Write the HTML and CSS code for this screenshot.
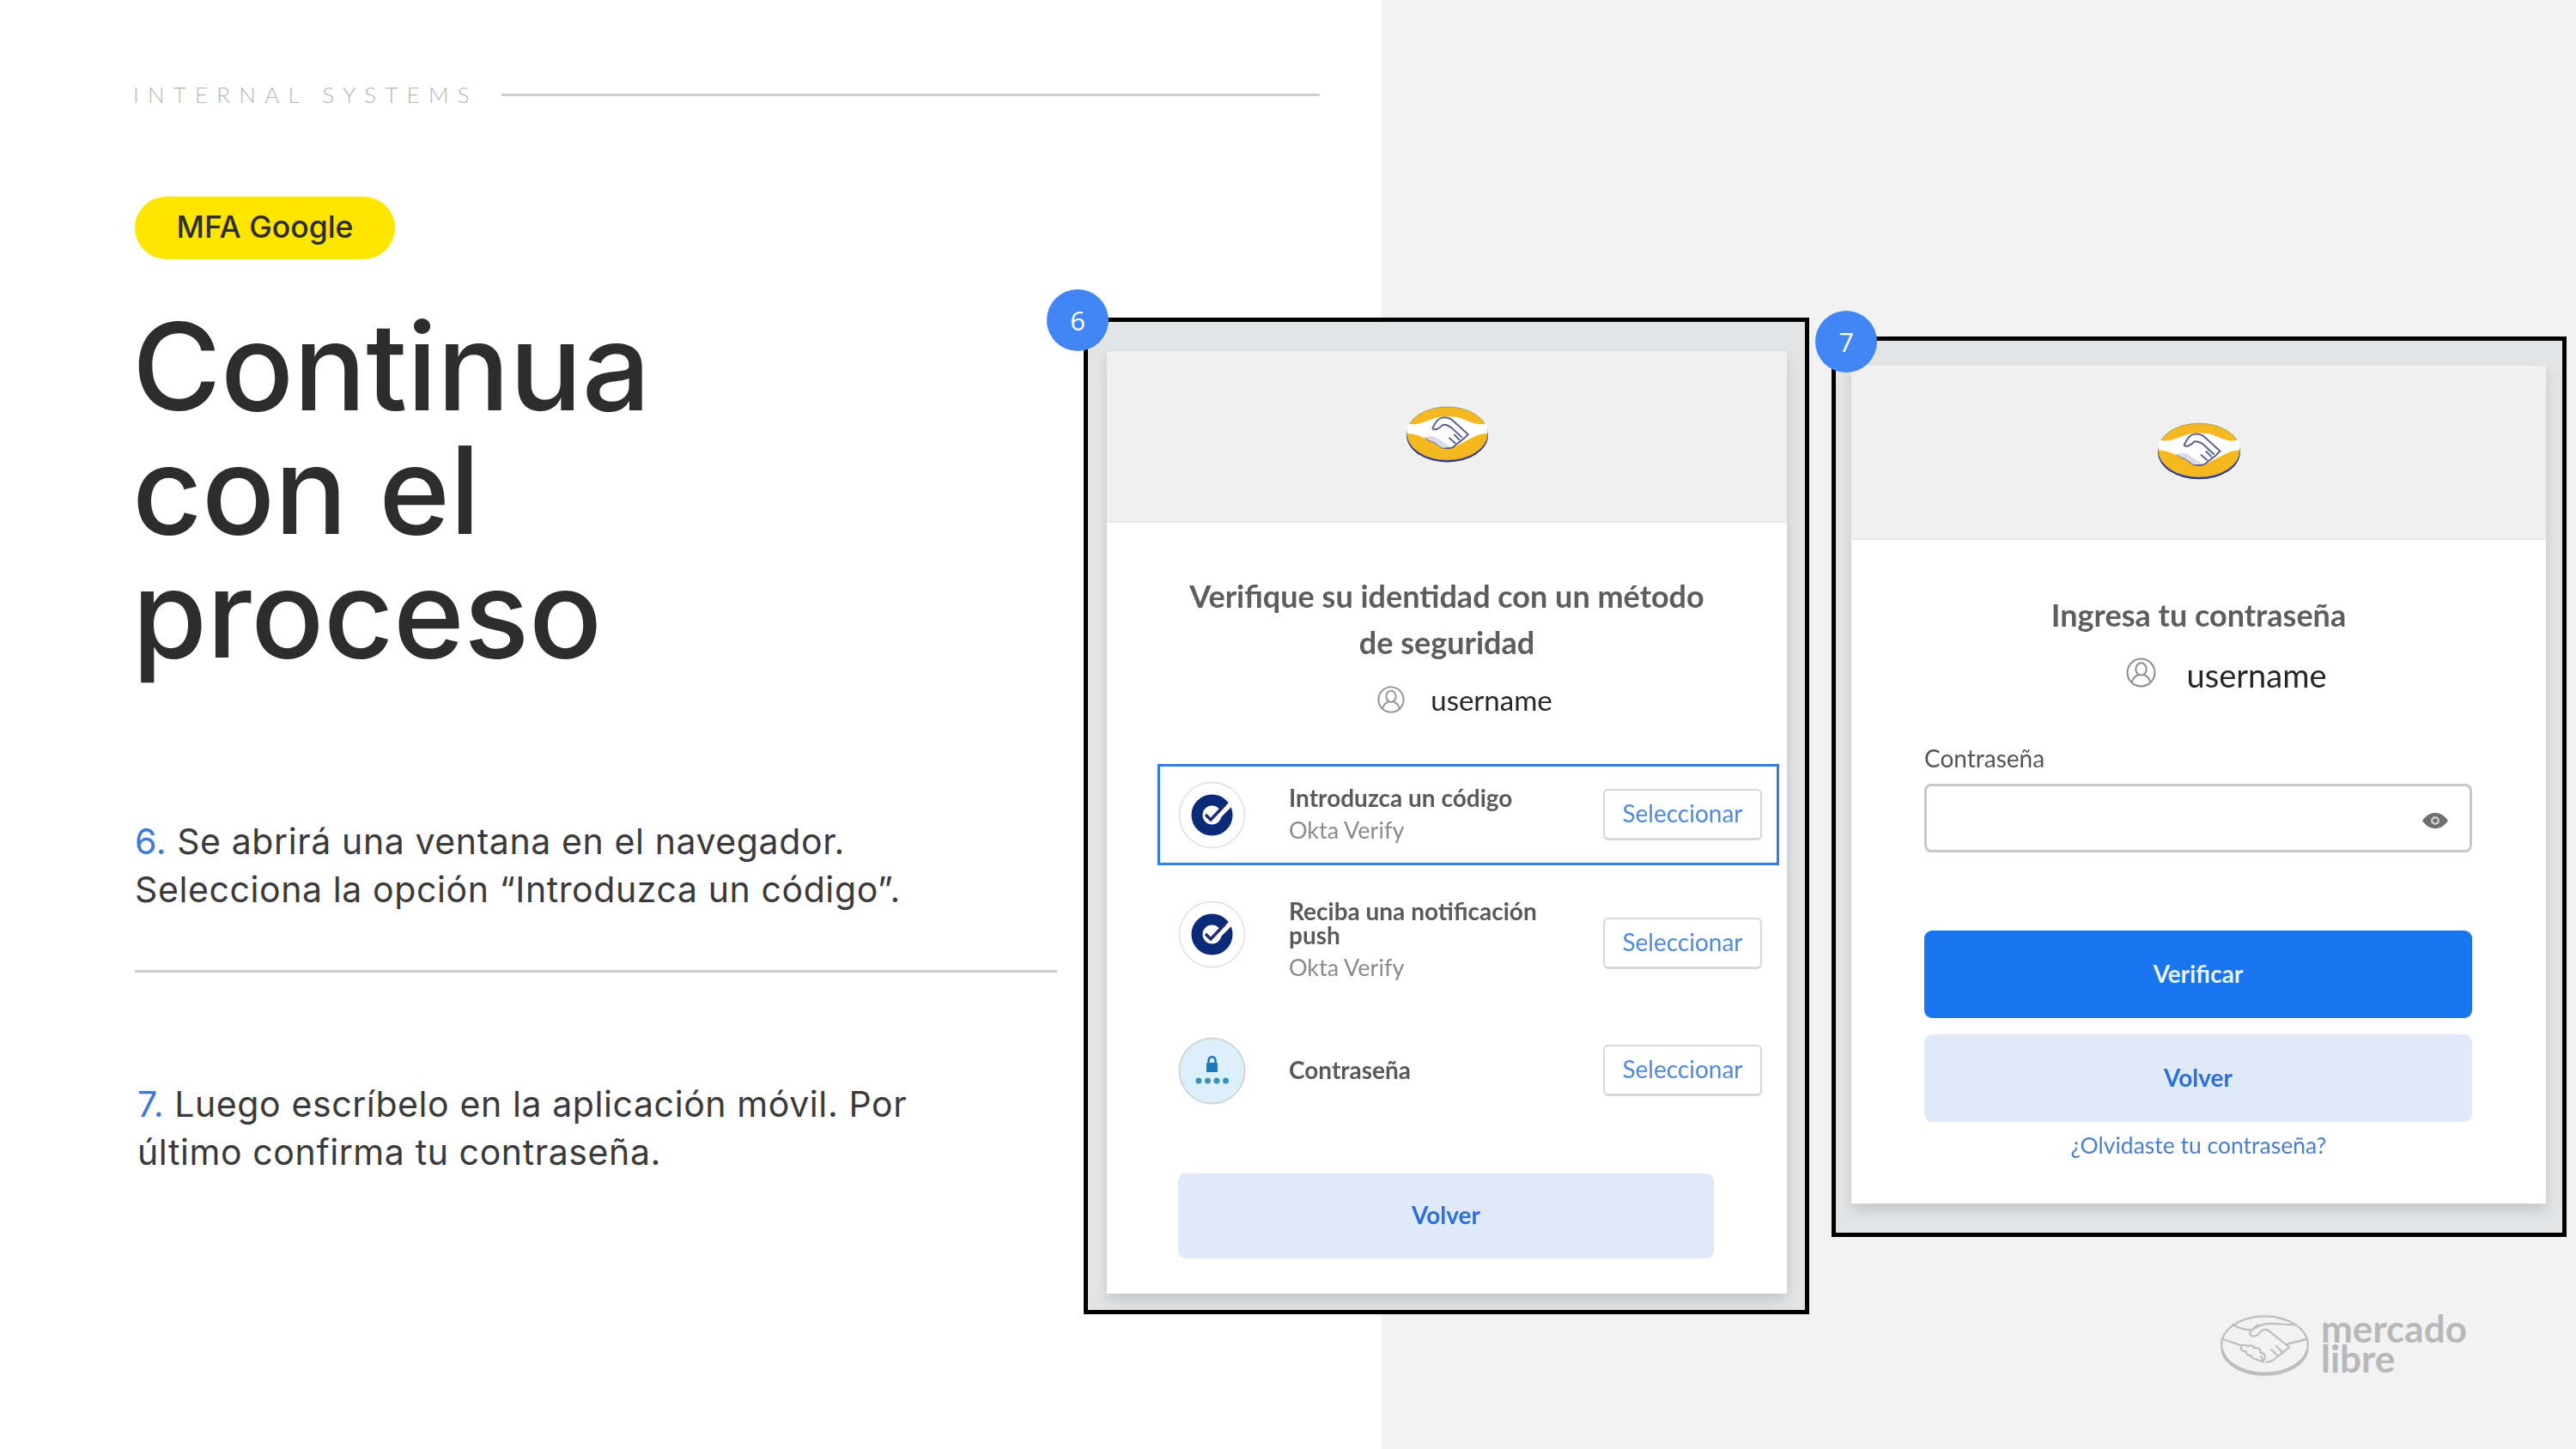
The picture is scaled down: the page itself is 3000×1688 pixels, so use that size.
FILE: index.html
```html
<!DOCTYPE html>
<html lang="es">
<head>
<meta charset="utf-8">
<title>MFA Google</title>
<link rel="stylesheet" href="styles.css">
</head>
<body>
<svg class="defs" width="0" height="0" aria-hidden="true">
  <symbol id="ml-color" viewBox="0 0 100 68">
    <ellipse cx="50" cy="35" rx="49" ry="32.500" fill="#2f3180"/>
    <ellipse cx="50" cy="33" rx="48.500" ry="32" fill="#f5b91f" stroke="#8d8a78" stroke-width=".8"/>
    <path d="M4 21C15 24 24 18 37 14C47 12 60 12 67 15C76 18 85 24 96 21C99 25 99 29 98 33C86 33 75 41 63 47C55 51 45 51 38 47C28 41 14 33 2 33C1 29 1 25 4 21Z" fill="#fff"/>
    <path d="M32 27C36 20 38 15 44 14C48 13 52 14 55 16L75 34L70 39L56 50M32 27C36 30 40 27 44 23C48 21 52 24 55 26L68 38M24 38C28 42 34 42 38 46C42 50 48 52 56 50M60 45L52 38M65 41L58 34" fill="none" stroke="#59608f" stroke-width="2"/>
    <path d="M24 38C28 35 33 36 37 38C42 41 47 45 53 48C47 52 42 50 38 46C34 42 28 42 24 38Z" fill="#d9dbe6"/>
  </symbol>
  <symbol id="ml-gray" viewBox="0 0 106 74">
    <ellipse cx="53" cy="37" rx="51" ry="33.500" fill="none" stroke="#bdbdbd" stroke-width="2.200"/>
    <path d="M3 44C6 60 28 72 53 72C78 72 100 60 103 44" fill="none" stroke="#bdbdbd" stroke-width="3.500"/>
    <path d="M14 13C22 17 32 21 39 19C46 14 52 12 60 12C70 12 80 14 90 13M2 30L26 38M78 37C85 34 94 33 104 30M46 13C40 17 36 21 35 24C38 29 43 27 46 24C49 20 53 18 57 20L82 40L77 44L62 56L54 58M48 50L52 58M60 42L68 50M66 38L74 46" fill="none" stroke="#bdbdbd" stroke-width="2.200"/>
    <path d="M25 40C26 36 32 37 33 39C35 37 40 38 41 41C45 40 49 43 48 46C52 47 54 50 53 54C50 58 45 56 44 54C40 55 37 52 37 50C33 50 30 47 31 45C27 45 24 43 25 40Z" fill="none" stroke="#bdbdbd" stroke-width="2.200"/>
  </symbol>
  <symbol id="user" viewBox="0 0 34 34">
    <circle cx="17" cy="17" r="15.500" fill="none" stroke="#8f8f8f" stroke-width="2"/>
    <ellipse cx="17" cy="13" rx="6" ry="7" fill="none" stroke="#8f8f8f" stroke-width="2"/>
    <path d="M6.500 28C8 22 12 20 14 20M27.500 28C26 22 22 20 20 20" fill="none" stroke="#8f8f8f" stroke-width="2"/>
  </symbol>
  <symbol id="okta" viewBox="0 0 79 79">
    <circle cx="39.500" cy="39.500" r="38" fill="#fff" stroke="#ece2e6" stroke-width="2"/>
    <circle cx="39.500" cy="39.500" r="17.500" fill="none" stroke="#0b2a78" stroke-width="13"/>
    <path d="M46 38L64 20L68 24L50 42Z" fill="#fff"/>
    <path d="M32 39L38 45L55 27" fill="none" stroke="#232c72" stroke-width="3.500"/>
  </symbol>
  <symbol id="lock" viewBox="0 0 79 79">
    <circle cx="39.500" cy="39.500" r="38" fill="#dcf0fb" stroke="#d2d6d8" stroke-width="2"/>
    <rect x="33" y="30" width="13" height="11" rx="1" fill="#1f78bd"/>
    <path d="M35.500 30V27C35.500 22 43.500 22 43.500 27V30" fill="none" stroke="#1f78bd" stroke-width="2.500"/>
    <g fill="#3a90b8">
      <circle cx="24" cy="51" r="3.500"/>
      <circle cx="34.500" cy="51" r="3.500"/>
      <circle cx="45" cy="51" r="3.500"/>
      <circle cx="55.500" cy="51" r="3.500"/>
    </g>
  </symbol>
</svg>

<main class="slide">
  <section class="left">
    <div class="eyebrow">
      <span class="eyebrow-text">INTERNAL SYSTEMS</span>
      <span class="eyebrow-line"></span>
    </div>
    <div class="pill">MFA Google</div>
    <h1 class="title">Continua<br>con el<br>proceso</h1>
    <p class="step"><span class="num">6.</span> Se abrirá una ventana en el navegador.<br>Selecciona la opción “Introduzca un código”.</p>
    <hr class="divider">
    <p class="step step-two"><span class="num">7.</span> Luego escríbelo en la aplicación móvil. Por<br>último confirma tu contraseña.</p>
  </section>
  <section class="right"></section>

  <article class="frame frame-six">
    <span class="badge">6</span>
    <div class="card">
      <header class="card-head"><svg class="logo logo-six"><use href="#ml-color"/></svg></header>
      <div class="card-body body-six">
        <h2 class="card-title">Verifique su identidad con un método<br>de seguridad</h2>
        <div class="user"><svg class="user-icon"><use href="#user"/></svg><span class="user-name">username</span></div>
        <div class="row row-selected">
          <svg class="row-icon"><use href="#okta"/></svg>
          <div class="row-text"><div class="row-name">Introduzca un código</div><div class="row-sub">Okta Verify</div></div>
          <span class="select">Seleccionar</span>
        </div>
        <div class="row row-push">
          <svg class="row-icon"><use href="#okta"/></svg>
          <div class="row-text"><div class="row-name">Reciba una notificación<br>push</div><div class="row-sub">Okta Verify</div></div>
          <span class="select">Seleccionar</span>
        </div>
        <div class="row row-pass">
          <svg class="row-icon"><use href="#lock"/></svg>
          <div class="row-text"><div class="row-name">Contraseña</div></div>
          <span class="select">Seleccionar</span>
        </div>
        <div class="btn btn-light btn-back-six">Volver</div>
      </div>
    </div>
  </article>

  <article class="frame frame-seven">
    <span class="badge">7</span>
    <div class="card">
      <header class="card-head head-seven"><svg class="logo logo-seven"><use href="#ml-color"/></svg></header>
      <div class="card-body body-seven">
        <h2 class="card-title title-seven">Ingresa tu contraseña</h2>
        <div class="user user-seven"><svg class="user-icon"><use href="#user"/></svg><span class="user-name">username</span></div>
        <div class="form">
          <label class="field-label">Contraseña</label>
          <div class="input">
            <svg class="eye" viewBox="0 0 32 20"><path d="M1 10C6 3 11 1 16 1S26 3 31 10C26 17 21 19 16 19S6 17 1 10Z" fill="#6f6f6f"/><circle cx="16" cy="10" r="5" fill="#cfcfcf"/><circle cx="16" cy="10" r="2.500" fill="#6f6f6f"/></svg>
          </div>
          <div class="btn btn-primary">Verificar</div>
          <div class="btn btn-light btn-back-seven">Volver</div>
        </div>
        <a class="forgot">¿Olvidaste tu contraseña?</a>
      </div>
    </div>
  </article>

  <div class="brand">
    <svg class="brand-logo"><use href="#ml-gray"/></svg>
    <span class="brand-text">mercado<br>libre</span>
  </div>
</main>
</body>
</html>
```

FILE: styles.css
```css
* { box-sizing: border-box; }
html, body { margin: 0; padding: 0; background: #fff; }
.defs { position: absolute; }

.slide {
  position: relative;
  display: flex;
  width: 3000px;
  height: 1688px;
  overflow: hidden;
  font-family: "Lato", "Liberation Sans", sans-serif;
  color: #2d2d2d;
}
.left { width: 1609px; padding: 93px 72px 0 157px; background: #fff; font-family: "Inter", "Liberation Sans", sans-serif; }
.right { flex: 1; background: #f2f2f2; }

.eyebrow { display: flex; align-items: center; gap: 27px; height: 34px; margin-left: -2px; }
.eyebrow-text { font-family: "Lato", sans-serif; font-size: 26px; font-weight: 300; letter-spacing: 10.200px; color: #b4b4b6; white-space: nowrap; }
.eyebrow-line { flex: 1; height: 3px; background: #d0d0d0; }

.pill {
  display: flex;
  align-items: center;
  justify-content: center;
  width: 303px;
  height: 73px;
  margin-top: 102px;
  padding-bottom: 2px;
  border-radius: 37px;
  background: #ffe600;
  font-size: 35.500px;
  font-weight: 500;
  color: #2d2d2d;
}

.title { margin: 53px 0 0 -3px; font-size: 141px; line-height: 144px; font-weight: 500; letter-spacing: -.4px; color: #2d2d2d; font-variant-ligatures: none; }

.step { margin: 165px 0 0; font-size: 41px; line-height: 56px; letter-spacing: .6px; color: #3a3a3a; }
.step-two { margin: 0 0 0 3px; }
.num { color: #3b78d8; }
.divider { width: 1074px; height: 3px; margin: 66px 0 125px; border: 0; background: #cfcfcf; }

.frame { position: absolute; border: 5px solid #000; background: #e3e4e6; }
.frame-six { left: 1262px; top: 370px; width: 845px; height: 1161px; padding: 34px 21px 0 22px; }
.frame-seven { left: 2133px; top: 392px; width: 856px; height: 1049px; padding: 29px 19px 0 18px; }

.badge {
  position: absolute;
  z-index: 2;
  display: flex;
  align-items: center;
  justify-content: center;
  width: 72px;
  height: 72px;
  border-radius: 50%;
  background: #4285f4;
  color: #fff;
  font-family: "Open Sans", sans-serif;
  font-size: 31px;
}
.frame-six .badge { left: -48px; top: -38px; }
.frame-seven .badge { left: -24px; top: -35px; }

.card { background: #fff; box-shadow: 0 8px 14px rgba(0, 0, 0, .13); }
.card-head {
  display: flex;
  align-items: center;
  justify-content: center;
  height: 200px;
  background: #f0f0f1;
  border-bottom: 2px solid #e8e8ea;
  padding-bottom: 4px;
}
.head-seven { height: 203px; padding-bottom: 2px; }
.logo { filter: blur(.5px); }
.logo-six { width: 97px; height: 66px; }
.logo-seven { width: 98px; height: 67px; }

.card-body { filter: blur(.45px); }
.body-six { padding: 58px 9px 41px 59px; }
.body-seven { padding: 62px 0 48px; }

.card-title {
  margin: 0;
  font-size: 36px;
  line-height: 54px;
  font-weight: 700;
  color: #5d5d5d;
  text-align: center;
}
.body-six .card-title { margin-left: -59px; margin-right: -9px; }
.title-seven { font-size: 36px; line-height: 50px; }

.user { display: flex; align-items: center; justify-content: center; gap: 30px; height: 40px; margin: 20px -9px 55px -59px; padding-left: 42px; }
.user-icon { width: 32px; height: 32px; }
.user-name { font-size: 33px; color: #262626; }
.user-seven { height: 44px; margin: 23px 0 58px; padding-left: 64px; gap: 36px; }
.user-seven .user-name { font-size: 38px; }
.user-seven .user-icon { width: 35px; height: 35px; margin-bottom: 6px; }

.row { display: flex; align-items: center; padding: 0 17px 0 21px; border: 3px solid transparent; }
.row-selected { height: 118px; border-color: #2f7de6; }
.row-push { height: 120px; margin-top: 27px; }
.row-pass { height: 118px; margin-top: 33px; }
.row-icon { flex: none; width: 79px; height: 79px; }
.row-text { flex: 1; margin-left: 50px; padding-bottom: 3px; }
.row-name { font-size: 28px; line-height: 28px; font-weight: 700; color: #5a5a5a; }
.row-sub { margin-top: 10px; font-size: 27px; line-height: 28px; color: #8a8a8a; }
.row-push .row-icon { margin-bottom: 14px; }
.row-push .select { margin-top: 8px; }

.select {
  flex: none;
  width: 185px;
  height: 60px;
  line-height: 53px;
  border: 2px solid #d8d8d8;
  border-bottom-width: 3px;
  border-radius: 6px;
  background: #fff;
  color: #4d88e2;
  font-size: 28px;
  text-align: center;
}

.btn { display: flex; align-items: center; justify-content: center; padding-bottom: 3px; border-radius: 9px; font-size: 28px; font-weight: 700; }
.btn-light { background: #dfe9f8; color: #2d6fdc; }
.btn-primary { height: 102px; margin-top: 91px; background: #1a75f0; color: #eaf2ff; }
.btn-back-six { width: 624px; height: 99px; margin: 61px 0 0 24px; }
.btn-back-seven { height: 102px; margin-top: 19px; }

.form { margin: 0 86px 0 85px; }
.field-label { display: block; font-size: 28px; line-height: 34px; color: #555; }
.input {
  display: flex;
  align-items: center;
  justify-content: flex-end;
  height: 80px;
  margin-top: 13px;
  padding: 6px 24px 0 0;
  border: 3px solid #c8c8c8;
  border-radius: 8px;
}
.eye { width: 32px; height: 20px; }
.forgot { display: block; margin-top: 7px; font-size: 26.500px; line-height: 40px; color: #4a7fd0; text-align: center; }

.brand { position: absolute; left: 2585px; top: 1530px; display: flex; gap: 13px; }
.brand-logo { width: 105px; height: 73px; }
.brand-text { font-size: 44px; line-height: 35px; font-weight: 700; color: #b8b8b8; margin-top: 0; }
```
